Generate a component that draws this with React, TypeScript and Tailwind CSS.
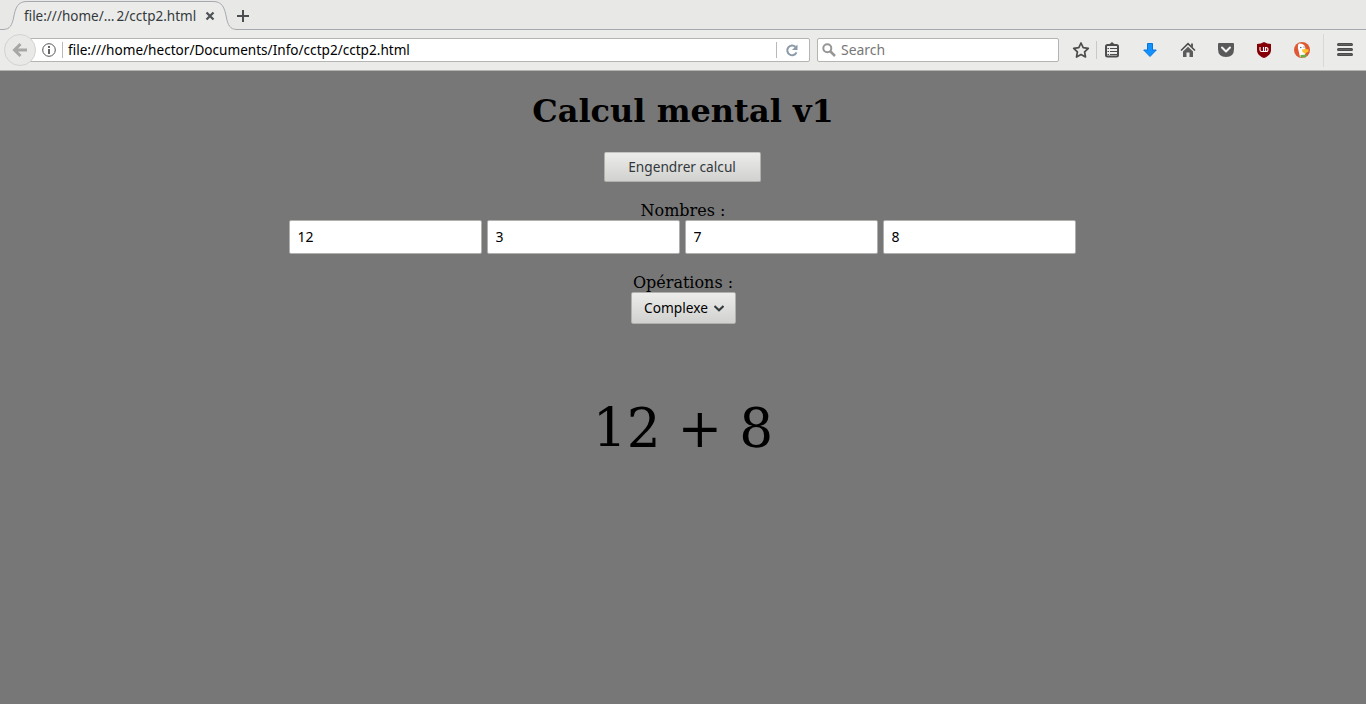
import React from "react";

const UI = "font-['Noto_Sans','Open_Sans',sans-serif]";

function TabStrip() {
  return (
    <div className="relative h-[30px] shrink-0 bg-[#e8e8e7]">
      <svg className="absolute inset-0" width="1366" height="30" viewBox="0 0 1366 30" fill="none">
        <path d="M0 29.5H3C10 29.5 12 25 13.5 18C15.5 7 18 1.5 27 1.5H213C222 1.5 224.5 7 226.5 18C228 25 230 29.5 237 29.5H1366V30H0Z" fill="#ebebea" />
        <path d="M0 29.5H3C10 29.5 12 25 13.5 18C15.5 7 18 1.5 27 1.5H213C222 1.5 224.5 7 226.5 18C228 25 230 29.5 237 29.5H1366" stroke="#a5a9ad" />
      </svg>
      <div className="relative flex h-[30px] items-center pl-6 pt-px text-[#33393b]">
        <span className="w-[181px] whitespace-nowrap text-[15px] leading-5">
          <span className="inline-block origin-left -translate-y-px scale-x-[0.9]">file:///home/…{"\u2009"}2/cctp2.html</span>
        </span>
        <svg width="10" height="10" viewBox="0 0 10 10" stroke="#4d5254" strokeWidth="2.2">
          <path d="M1.5 1.5L8.5 8.5M8.5 1.5L1.5 8.5" />
        </svg>
        <svg className="ml-[21px]" width="14" height="14" viewBox="0 0 14 14" stroke="#4b4e50" strokeWidth="2">
          <path d="M7 1V13M1 7H13" />
        </svg>
      </div>
    </div>
  );
}

function ToolbarIcons() {
  return (
    <svg className="ml-3 shrink-0" width="295" height="40" viewBox="1071 30 295 40" fill="none">
      <path d="M1081 43L1083.2 47.7L1088.3 48.3L1084.6 51.9L1085.5 57L1081 54.5L1076.5 57L1077.4 51.9L1073.7 48.3L1078.8 47.7Z" stroke="#4c4c4c" strokeWidth="1.7" strokeLinejoin="round" />
      <path d="M1096.5 41V59" stroke="#c9c9c7" />
      <rect x="1106" y="45" width="12" height="11.5" rx="1.5" stroke="#4c4c4c" strokeWidth="2" />
      <path d="M1108 45.5L1112 42L1116 45.5Z" fill="#4c4c4c" />
      <path d="M1107.5 48.5H1109M1110 48.5H1117M1107.5 51.5H1109M1110 51.5H1117M1107.5 54.5H1109M1110 54.5H1117" stroke="#4c4c4c" />
      <path d="M1147.5 43.5H1152.5V50H1156.300L1150 56.500L1143.700 50H1147.500Z" fill="#1292ff" stroke="#0875d8" strokeLinejoin="round" />
      <path d="M1181 50.5L1188 43.700L1195 50.500" stroke="#4c4c4c" strokeWidth="1.6" />
      <path d="M1191 43.5H1193V48H1191Z" fill="#5c5c5c" />
      <path d="M1183 51.500L1188 46.800L1193 51.500V57H1189.500V52.500H1186.500V57H1183Z" fill="#5c5c5c" />
      <path d="M1218 44Q1218 43 1219 43H1233Q1234 43 1234 44V49Q1234 57 1226 57Q1218 57 1218 49Z" fill="#595959" />
      <path d="M1222 47.500L1226 51.500L1230 47.500" stroke="#f3f3f2" strokeWidth="2" strokeLinecap="round" strokeLinejoin="round" />
      <path d="M1264 42Q1267 44 1271 44V50C1271 54 1268 56.5 1264 58C1260 56.5 1257 54 1257 50V44Q1261 44 1264 42Z" fill="#850006" />
      <path d="M1260 47V50Q1260 51.500 1261.700 51.500H1263.500V47M1263.500 51.500H1266Q1268 51.500 1268 49.500Q1268 47.500 1266 47.500H1265.500V51.500" stroke="#fff" strokeWidth="1.1" />
      <circle cx="1302" cy="50" r="8" fill="#de5833" />
      <path d="M1298 45L1299 43.500Q1304.500 43.500 1305.300 47.500L1305.500 53L1304 57.200L1300 57L1298.500 50.500Q1297.500 47.500 1298 45Z" fill="#fff" />
      <circle cx="1300.8" cy="47.5" r="0.7" fill="#35506b" />
      <circle cx="1304" cy="47" r="0.6" fill="#35506b" />
      <path d="M1302 49.500Q1305 48.500 1308.500 49.500V51.500L1305 53.500L1302.500 52Z" fill="#fdc52c" />
      <path d="M1300.500 55L1307 54.500L1305.500 57.200L1300.500 57.500Z" fill="#63b345" />
      <path d="M1323.5 34V67" stroke="#d8d8d6" />
      <path d="M1338.5 44.5H1351.5M1338.5 49.5H1351.5M1338.5 54.5H1351.5" stroke="#4b4b4b" strokeWidth="3" strokeLinecap="round" />
      <path d="M1338.5 44.5H1351.5M1338.5 49.5H1351.5M1338.5 54.5H1351.5" stroke="#626262" />
    </svg>
  );
}

function Toolbar() {
  return (
    <div className="flex h-[41px] shrink-0 items-center border-b border-[#b3b3b0] bg-[#ebebea]">
      <div className="z-10 ml-1 flex size-8 shrink-0 items-center justify-center rounded-full border border-[#d3d3d1] bg-[#e9e9e7]">
        <svg width="16" height="16" viewBox="0 0 16 16" fill="none" stroke="#a7a7a6" strokeWidth="3">
          <path d="M8.5 2L2.5 8L8.5 14M3 8H15" />
        </svg>
      </div>
      <div className="-ml-2 flex h-6 w-[782px] shrink-0 items-center rounded-[2px] border border-[#b4b4b1] bg-white pl-[13px]">
        <svg width="14" height="14" viewBox="0 0 14 14" fill="none" stroke="#555">
          <circle cx="7" cy="7" r="6.3" />
          <path d="M7 6V11M7 3V5" strokeWidth="1.8" />
        </svg>
        <span className="ml-[6px] h-4 w-px bg-[#b9b9b9]" />
        <span className="ml-[5px] flex-1 whitespace-nowrap text-[15px] leading-5 text-black">
          <span className="inline-block origin-left -translate-y-px scale-x-[0.905]">file:///home/hector/Documents/Info/cctp2/cctp2.html</span>
        </span>
        <span className="h-4 w-px bg-[#b9b9b9]" />
        <svg className="ml-2 mr-[10px]" width="14" height="14" viewBox="0 0 14 14" fill="none">
          <path d="M11.5 9.3A4.8 4.8 0 1 1 10.5 4" stroke="#8c9aa8" strokeWidth="2" />
          <path d="M12.5 1.5V7H7Z" fill="#8c9aa8" />
        </svg>
      </div>
      <div className="ml-[7px] flex h-6 w-[242px] shrink-0 items-center rounded-[2px] border border-[#b4b4b1] bg-white pl-1">
        <svg width="14" height="14" viewBox="0 0 14 14" fill="none" stroke="#969696">
          <circle cx="5.3" cy="5.3" r="4" strokeWidth="2" />
          <path d="M8 8L13 13" strokeWidth="2.5" />
        </svg>
        <span className="ml-[5px] inline-block origin-left -translate-y-px scale-x-[0.93] text-[15px] leading-5 text-[#777]">Search</span>
      </div>
      <ToolbarIcons />
    </div>
  );
}

export default function App() {
  return (
    <div className={`flex h-[704px] w-[1366px] flex-col overflow-hidden bg-[#777777] ${UI}`}>
      <TabStrip />
      <Toolbar />
      <main className="flex flex-1 flex-col items-center font-['DejaVu_Serif',serif] text-[16px] leading-[19px] text-black">
        <h1 className="mt-[21px] text-[32px] font-bold leading-[38px]">Calcul mental v1</h1>
        <button className={`mr-[2px] mt-[22px] h-[30px] w-[157px] rounded-[2px] border border-[#b0b0ac] border-t-[#c4c4c2] bg-linear-to-b from-[#ececeb] to-[#d1d1cf] text-[15px] leading-5 text-[#33393b] ${UI}`}>
          <span className="inline-block -translate-y-px scale-x-[0.912]">Engendrer calcul</span>
        </button>
        <div className="mt-[19px]">Nombres :</div>
        <div className="mr-[2px] flex gap-[5px]">
          {["12", "3", "7", "8"].map((value) => (
            <input
              key={value}
              defaultValue={value}
              className={`h-[34px] w-[193px] rounded-[2px] border border-[#b0b0ac] bg-white px-2 pb-[2px] text-[14px] text-black ${UI}`}
            />
          ))}
        </div>
        <div className="mt-[19px]">Opérations :</div>
        <button className={`flex h-8 w-[105px] items-center rounded-[2px] border border-[#b0b0ac] bg-linear-to-b from-[#ececeb] to-[#d1d1cf] pl-3 text-[15px] leading-5 ${UI}`}>
          <span className="w-[70px] shrink-0 origin-left -translate-y-px scale-x-[0.915] text-left">Complexe</span>
          <svg width="10" height="7" viewBox="0 0 10 7" fill="none" stroke="#33393b" strokeWidth="2">
            <path d="M0.5 1L5 5.3L9.5 1" />
          </svg>
        </button>
        <div className="mt-[74px] text-[53.33px] leading-[62px]">12 + 8</div>
      </main>
    </div>
  );
}
